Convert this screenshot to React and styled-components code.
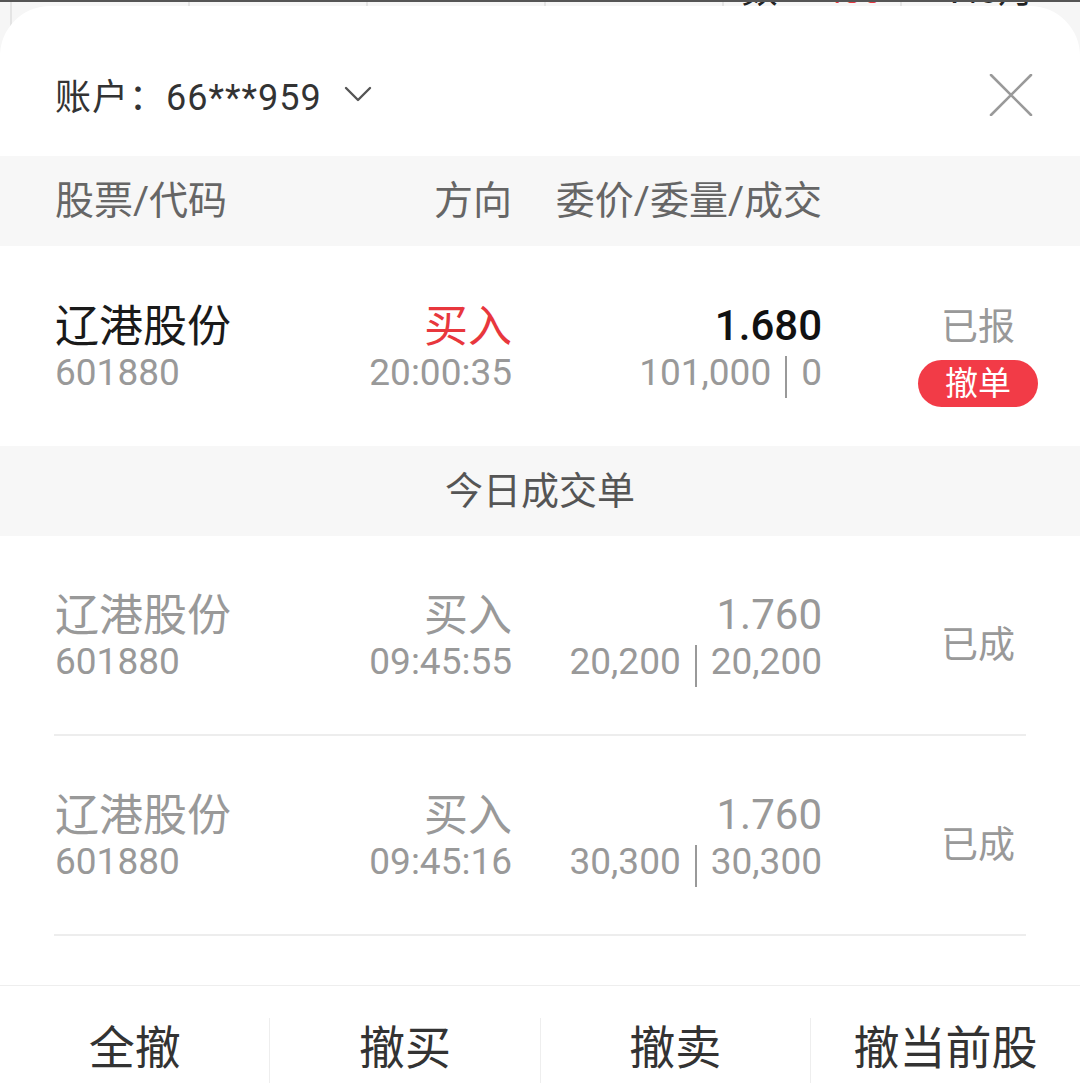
import React from 'react'
import styled, { createGlobalStyle, css } from 'styled-components'

const GlobalStyle = createGlobalStyle`
  html, body {
    margin: 0;
    padding: 0;
    height: 100%;
    overflow: hidden;
  }
  body {
    font-family: Roboto, "Noto Sans CJK SC", sans-serif;
    background: #f6f6f6;
  }
`

const orders = [
  { name: '辽港股份', code: '601880', side: '买入', time: '20:00:35', price: '1.680', qty: '101,000', done: '0', status: '已报', open: true },
]

const trades = [
  { name: '辽港股份', code: '601880', side: '买入', time: '09:45:55', price: '1.760', qty: '20,200', done: '20,200', status: '已成' },
  { name: '辽港股份', code: '601880', side: '买入', time: '09:45:16', price: '1.760', qty: '30,300', done: '30,300', status: '已成' },
]

const OrderRow = ({ item, muted }) => (
  <Row $muted={muted}>
    <Cell>
      <Name>{item.name}</Name>
      <Sub>{item.code}</Sub>
    </Cell>
    <Cell $right>
      <Side $open={item.open}>{item.side}</Side>
      <Sub>{item.time}</Sub>
    </Cell>
    <Cell $right>
      <Price $open={item.open}>{item.price}</Price>
      <Sub>
        {item.qty}<Bar />{item.done}
      </Sub>
    </Cell>
    <StatusCell>
      <Status>{item.status}</Status>
      {item.open && <CancelBadge>撤单</CancelBadge>}
    </StatusCell>
  </Row>
)

const App = () => {
  return (
    <Page>
      <GlobalStyle />
      <Backdrop>
        <BackCell />
        <BackCell />
        <BackCell />
        <BackCell />
        <BackCell>
          <BackText>数</BackText>
          <BackText $red>+.80</BackText>
        </BackCell>
        <BackCell>
          <BackText>7.5月</BackText>
        </BackCell>
      </Backdrop>

      <Sheet>
        <SheetHeader>
          <Account>
            账户：66***959
            <svg width="28" height="16" viewBox="0 0 28 16" fill="none">
              <path d="M2 2 L14 14 L26 2" stroke="#555" strokeWidth="2.4" strokeLinecap="round" strokeLinejoin="round" />
            </svg>
          </Account>
          <CloseButton>
            <svg width="44" height="42" viewBox="0 0 44 42" fill="none">
              <path d="M2 1 L42 41 M42 1 L2 41" stroke="#9a9a9a" strokeWidth="2.6" strokeLinecap="round" />
            </svg>
          </CloseButton>
        </SheetHeader>

        <ColumnHead>
          <span>股票/代码</span>
          <HeadRight>方向</HeadRight>
          <HeadRight>委价/委量/成交</HeadRight>
          <span />
        </ColumnHead>

        {orders.map(o => <OrderRow key={o.time} item={o} />)}

        <SectionBand>今日成交单</SectionBand>

        {trades.map(t => (
          <React.Fragment key={t.time}>
            <OrderRow item={t} muted />
            <Divider />
          </React.Fragment>
        ))}

        <Footer>
          <FooterButton>全撤</FooterButton>
          <FooterButton>撤买</FooterButton>
          <FooterButton>撤卖</FooterButton>
          <FooterButton>撤当前股</FooterButton>
        </Footer>
      </Sheet>
    </Page>
  )
}

const Page = styled.div`
  position: relative;
  height: 1083px;
  overflow: hidden;
  background: #f6f6f6;
`

const Backdrop = styled.div`
  display: grid;
  grid-template-columns: 10px repeat(5, 178px) 1fr;
  height: 60px;
  border-top: 2px solid #555;
  overflow: hidden;
  &::before {
    content: '';
  }
`

const BackCell = styled.div`
  border-left: 2px solid #e4e4e4;
  display: flex;
  justify-content: space-around;
  overflow: hidden;
`

const BackText = styled.span`
  margin-top: -29px;
  font-size: 36px;
  line-height: 36px;
  color: ${p => (p.$red ? '#e8373d' : '#222')};
`

const Sheet = styled.div`
  position: absolute;
  top: 6px;
  left: 0;
  right: 0;
  bottom: 0;
  background: #fff;
  border-radius: 50px 50px 0 0;
  display: flex;
  flex-direction: column;
  overflow: hidden;
`

const SheetHeader = styled.div`
  height: 150px;
  box-sizing: border-box;
  padding: 26px 47px 0 55px;
  display: flex;
  align-items: center;
  justify-content: space-between;
  flex-shrink: 0;
`

const Account = styled.div`
  display: flex;
  align-items: center;
  gap: 22px;
  font-size: 36px;
  color: #333;
  letter-spacing: 1px;
`

const CloseButton = styled.div`
  display: flex;
  align-items: center;
  margin-top: 2px;
`

const columns = css`
  display: grid;
  grid-template-columns: 1fr 200px 310px 216px;
  padding: 0 42px 0 55px;
  box-sizing: border-box;
  flex-shrink: 0;
`

const ColumnHead = styled.div`
  ${columns}
  height: 90px;
  padding-bottom: 8px;
  align-items: center;
  background: #f7f7f7;
  font-size: 39px;
  color: #666;
`

const HeadRight = styled.span`
  text-align: right;
  white-space: nowrap;
  justify-self: end;
`

const Row = styled.div`
  ${columns}
  height: ${p => (p.$muted ? '198px' : '200px')};
  padding-top: 8px;
  align-items: center;
  color: ${p => (p.$muted ? '#999' : '#1a1a1a')};
`

const Cell = styled.div`
  display: flex;
  flex-direction: column;
  align-items: ${p => (p.$right ? 'flex-end' : 'flex-start')};
  white-space: nowrap;
`

const Name = styled.div`
  font-size: 44px;
  line-height: 45px;
`

const Sub = styled.div`
  display: flex;
  align-items: center;
  font-size: 37px;
  line-height: 45px;
  color: #999;
`

const Side = styled.div`
  font-size: 44px;
  line-height: 45px;
  color: ${p => (p.$open ? '#e8373d' : 'inherit')};
`

const Price = styled.div`
  font-size: 42px;
  line-height: 45px;
  font-weight: ${p => (p.$open ? 500 : 400)};
  color: ${p => (p.$open ? '#111' : 'inherit')};
`

const Bar = styled.span`
  display: inline-block;
  width: 2px;
  height: 42px;
  margin: 8px 14px 0;
  background: #999;
`

const StatusCell = styled.div`
  justify-self: end;
  width: 120px;
  padding-top: 12px;
  display: flex;
  flex-direction: column;
  align-items: center;
  gap: 10px;
`

const Status = styled.div`
  font-size: 37px;
  line-height: 45px;
  color: #999;
`

const CancelBadge = styled.div`
  width: 120px;
  height: 47px;
  border-radius: 24px;
  background: #f23b47;
  color: #fff;
  font-size: 33px;
  line-height: 47px;
  text-align: center;
`

const SectionBand = styled.div`
  height: 90px;
  box-sizing: border-box;
  padding-bottom: 8px;
  flex-shrink: 0;
  background: #f7f7f7;
  display: flex;
  align-items: center;
  justify-content: center;
  font-size: 38px;
  color: #555;
`

const Divider = styled.div`
  height: 2px;
  margin: 0 54px;
  background: #ededed;
  flex-shrink: 0;
`

const Footer = styled.div`
  margin-top: 49px;
  border-top: 1px solid #eee;
  padding-top: 32px;
  display: flex;
  flex-shrink: 0;
`

const FooterButton = styled.div`
  flex: 1;
  height: 100px;
  line-height: 60px;
  text-align: center;
  font-size: 46px;
  color: #333;

  & + & {
    border-left: 1px solid #eee;
  }
`

export default App
